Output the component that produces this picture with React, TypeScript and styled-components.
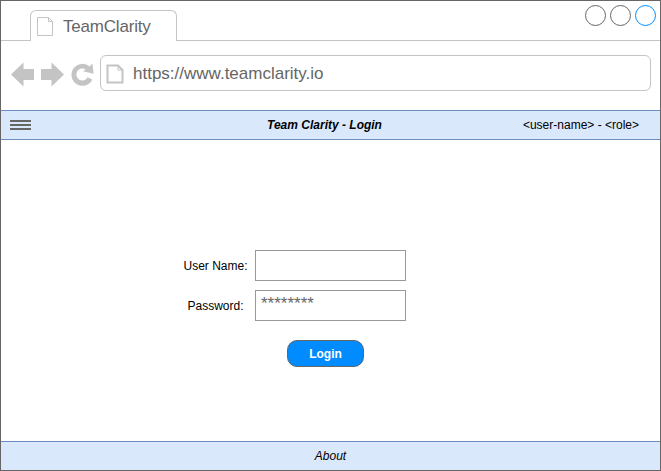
import React from "react";
import styled, { createGlobalStyle } from "styled-components";

const Global = createGlobalStyle`
  *, *::before, *::after { box-sizing: border-box; }
  body { margin: 0; background: #fff; }
`;

const Window = styled.div`
  display: flex;
  flex-direction: column;
  width: 661px;
  height: 471px;
  background: #fff;
  border: 1px solid #666;
  overflow: hidden;
  font-family: "Liberation Sans", Helvetica, Arial, sans-serif;
  font-size: 12px;
  color: #000;
`;

const TabStrip = styled.div`
  display: flex;
  flex: none;
  height: 40px;
  align-items: stretch;
`;

const StripSpace = styled.div<{ $width?: number }>`
  flex: ${(p) => (p.$width ? `0 0 ${p.$width}px` : "1")};
  display: flex;
  justify-content: flex-end;
  gap: 4px;
  padding: 4px 4px 0 0;
  border-bottom: 1px solid #c4c4c4;
`;

const Tab = styled.div`
  display: flex;
  width: 147px;
  margin-top: 9px;
  padding: 6px 0 0 6px;
  border: 1px solid #c4c4c4;
  border-bottom: 0;
  border-radius: 6px 6px 0 0;
`;

const ChromeText = styled.span<{ $gap: number; $spacing: number }>`
  margin-left: ${(p) => p.$gap}px;
  font-size: 17px;
  line-height: 20px;
  letter-spacing: ${(p) => p.$spacing}px;
  color: #666;
  white-space: nowrap;
`;

const WindowButton = styled.span<{ $color: string }>`
  width: 21px;
  height: 21px;
  border: 1px solid ${(p) => p.$color};
  border-radius: 50%;
`;

const Toolbar = styled.div`
  display: flex;
  flex: none;
  height: 69px;
  padding: 14px 9px 0 10px;
`;

const NavIcons = styled.svg`
  flex: none;
  width: 89px;
  height: 36px;
`;

const AddressBar = styled.div`
  display: flex;
  flex: 1;
  height: 36px;
  padding: 8px 0 0 5px;
  border: 1px solid #c4c4c4;
  border-radius: 6px;
`;

const Bar = styled.div`
  display: grid;
  grid-template-columns: 1fr auto 1fr;
  align-items: center;
  flex: none;
  height: 30px;
  margin: 0 -1px;
  padding: 0 21px 0 9px;
  background: #dae8fc;
  border: 1px solid #6c8ebf;
`;

const Footer = styled(Bar)`
  grid-template-columns: 1fr;
  justify-items: center;
  margin-bottom: -1px;
  padding: 0;
  font-style: italic;
`;

const Title = styled.h1`
  margin: 0 0 0 -10px;
  font-size: 12px;
  font-weight: bold;
  font-style: italic;
  transform: translateX(5px);
`;

const UserInfo = styled.span`
  justify-self: end;
`;

const Content = styled.main`
  flex: 1;
  padding: 110px 0 0 174px;
`;

const Form = styled.form`
  display: grid;
  grid-template-columns: 80px 151px;
  row-gap: 9px;
`;

const Label = styled.label`
  align-self: center;
  justify-self: center;
  white-space: nowrap;
  padding-left: 1px;
`;

const Field = styled.input`
  width: 151px;
  height: 31px;
  padding: 0 5px 3px;
  border: 1px solid #999;
  border-radius: 0;
  outline: 0;
  background: #fff;
  font: 17px "Liberation Sans", Helvetica, Arial, sans-serif;
  color: #666;
`;

const LoginButton = styled.button`
  grid-column: 1 / 3;
  width: 77px;
  height: 27px;
  margin: 10px 0 0 112px;
  padding: 0;
  border: 1px solid #666;
  border-radius: 10px;
  background: #008cff;
  color: #fff;
  font: bold 12px "Liberation Sans", Helvetica, Arial, sans-serif;
`;

const Icon = styled.svg`
  flex: none;
  display: block;
`;

const PageIcon = ({ thick = false }: { thick?: boolean }) => (
  <Icon width="18" height="20" viewBox="0 0 18 20" fill="none" stroke="#c4c4c4" strokeWidth={thick ? 2 : 1}>
    {thick ? (
      <>
        <path d="M1.5 1.5H12L16.5 6V18.5H1.5Z" />
        <path d="M12 1.5V6H16.5" strokeWidth="1" />
      </>
    ) : (
      <path d="M.5 .5H11.5L15.5 4.5V18.5H.5ZM11.5 .5V4.5H15.5" />
    )}
  </Icon>
);

export default function App() {
  return (
    <>
      <Global />
      <Window>
        <TabStrip>
          <StripSpace $width={29} />
          <Tab>
            <PageIcon />
            <ChromeText $gap={8} $spacing={-0.2}>TeamClarity</ChromeText>
          </Tab>
          <StripSpace>
            <WindowButton $color="#666" />
            <WindowButton $color="#666" />
            <WindowButton $color="#008cff" />
          </StripSpace>
        </TabStrip>
        <Toolbar>
          <NavIcons viewBox="11 55 89 36" fill="#c4c4c4">
            <path d="M11 74.5L23.5 62.5V69H34V80H23.5V86.5Z" />
            <path d="M64 74.5L51.5 62.5V69H41V80H51.5V86.5Z" />
            <path d="M89.6 66.4L92.5 63.5L93.6 73.8L83 71.2L85.7 69.5A6 6 0 1 0 87.6 77.2L92.3 79.8A11 11 0 1 1 89.6 66.4Z" />
          </NavIcons>
          <AddressBar>
            <PageIcon thick />
            <ChromeText $gap={9} $spacing={0}>https://www.teamclarity.io</ChromeText>
          </AddressBar>
        </Toolbar>
        <Bar>
          <Icon width="21" height="11" viewBox="0 0 21 11" stroke="#666" strokeWidth="2">
            <path d="M0 1H21M0 5H21M0 9H21" />
          </Icon>
          <Title>Team Clarity - Login</Title>
          <UserInfo>&lt;user-name&gt; - &lt;role&gt;</UserInfo>
        </Bar>
        <Content>
          <Form onSubmit={(e) => e.preventDefault()}>
            <Label htmlFor="user">User Name:</Label>
            <Field id="user" />
            <Label htmlFor="password">Password:</Label>
            <Field id="password" defaultValue="********" />
            <LoginButton type="submit">Login</LoginButton>
          </Form>
        </Content>
        <Footer as="footer">About</Footer>
      </Window>
    </>
  );
}
